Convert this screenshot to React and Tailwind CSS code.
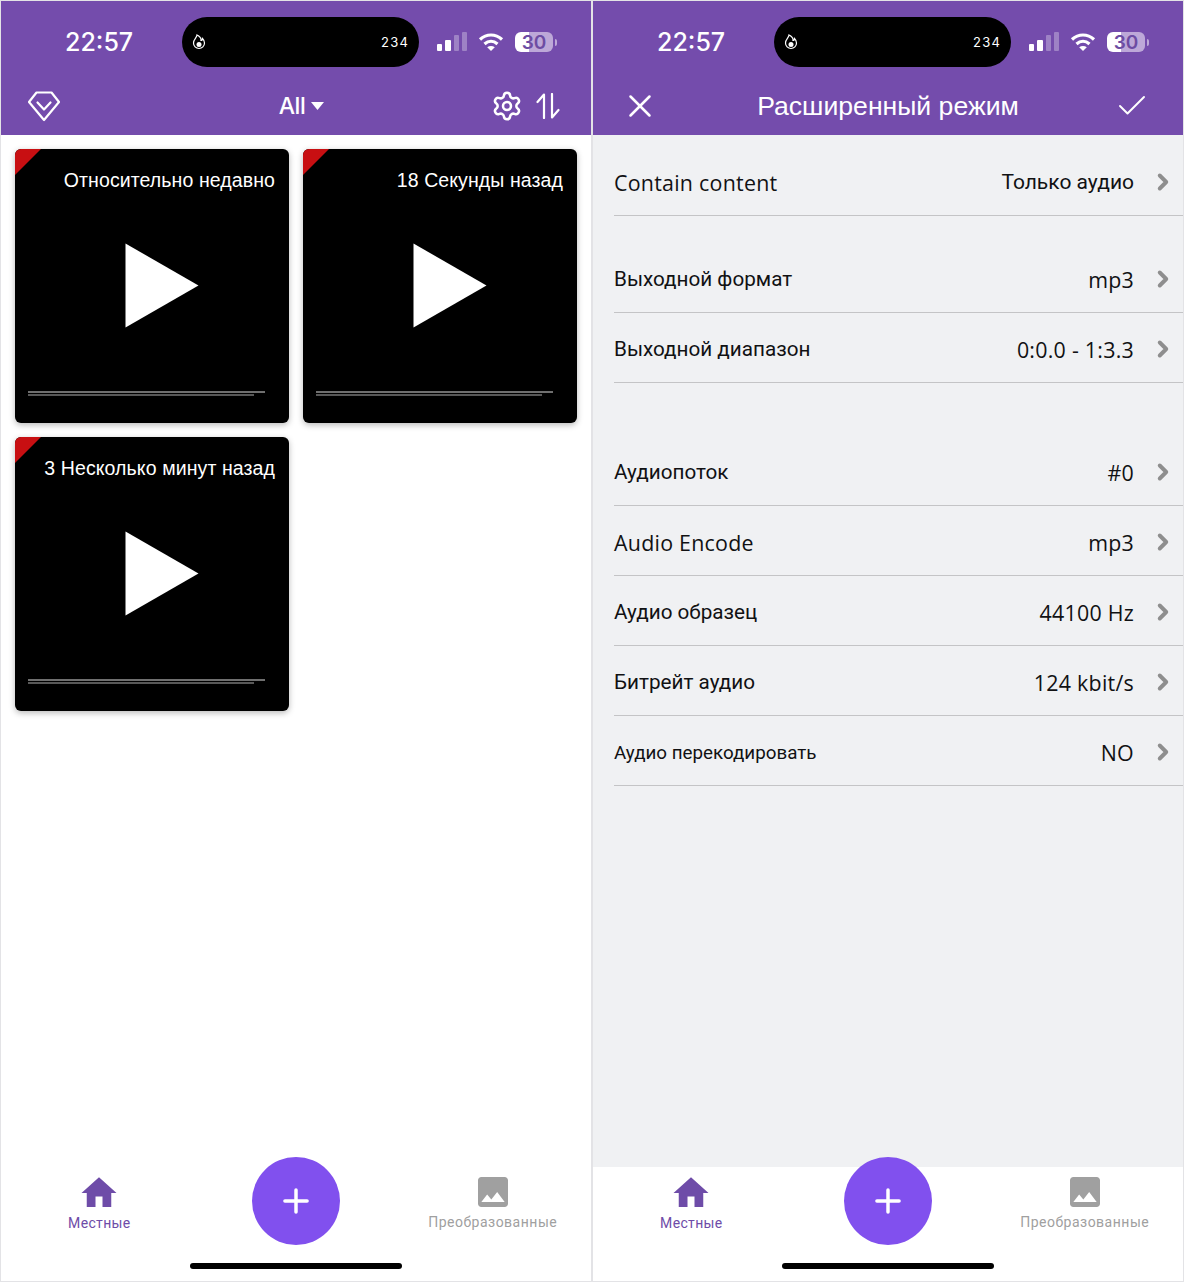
import React from 'react';
import { Settings, X, Check, Plus, ChevronRight } from 'lucide-react';
import { MdHome, MdImage } from 'react-icons/md';

const videos = [
  { label: 'Относительно недавно' },
  { label: '18 Секунды назад' },
  { label: '3 Несколько минут назад' },
];

const wide = "font-['Open_Sans'] text-[21.4px] tracking-[0.25px]";
const plain = "font-['Roboto'] text-[20.7px]";
const plainValue = "font-['Roboto'] text-[21px]";

const groups = [
  { gap: 'mt-[10px]', rows: [{ label: 'Contain content', value: 'Только аудио', labelFont: wide, valueFont: plainValue }] },
  {
    gap: 'mt-[27px]',
    rows: [
      { label: 'Выходной формат', value: 'mp3', labelFont: plain, valueFont: wide },
      { label: 'Выходной диапазон', value: '0:0.0 - 1:3.3', labelFont: plain, valueFont: wide },
    ],
  },
  {
    gap: 'mt-[53px]',
    rows: [
      { label: 'Аудиопоток', value: '#0', labelFont: plain, valueFont: wide },
      { label: 'Audio Encode', value: 'mp3', labelFont: wide, valueFont: wide },
      { label: 'Аудио образец', value: '44100 Hz', labelFont: plain, valueFont: wide },
      { label: 'Битрейт аудио', value: '124 kbit/s', labelFont: plain, valueFont: wide },
      { label: 'Аудио перекодировать', value: 'NO', labelFont: "font-['Roboto'] text-[18.8px]", valueFont: wide },
    ],
  },
];

const StatusBar = () => (
  <div className="flex items-center h-[50px] mt-[16px] pl-[64px] text-white">
    <span className="w-[117px] font-['Inter'] text-[25px] font-medium leading-none">22:57</span>
    <div className="w-[237px] h-[50px] rounded-full bg-black flex items-center justify-between pl-[10px] pr-[10px]">
      <svg width="14" height="16" viewBox="0 0 14 16" fill="none" stroke="#fff" strokeWidth="1.2">
        <path d="M5 1c0 2.500-3.500 4-3.500 8a5.500 5.500 0 0 0 11 0c0-2-1-3.500-2-4.500 0 1.500-.7 2-1.500 2C9.500 4.500 7.500 2 5 1z" />
        <circle cx="7" cy="10.500" r="2.500" fill="#fff" stroke="none" />
      </svg>
      <span className="font-['Inter'] text-[13px] tracking-[1.2px] leading-none">234</span>
    </div>
    <svg className="ml-[18px]" width="31" height="20" viewBox="0 0 31 20" fill="#fff">
      <rect x="0" y="12" width="5" height="7" rx="1" />
      <rect x="8" y="8" width="6" height="11" rx="1" />
      <rect x="17" y="3" width="5" height="16" rx="1" fillOpacity="0.3" />
      <rect x="25" y="0" width="5" height="19" rx="1" fillOpacity="0.3" />
    </svg>
    <svg className="ml-[10px]" width="26" height="20" viewBox="0 0 26 20" fill="none" stroke="#fff" strokeWidth="3.2">
      <path d="M2 7.500c6.500-6 15.500-6 22 0" />
      <path d="M6.500 12c4-3.500 9-3.500 13 0" />
      <path d="M13 19l-3.800-3.700c2.200-1.700 5.400-1.700 7.600 0z" fill="#fff" stroke="none" />
    </svg>
    <div className="ml-[11px] w-[38px] h-[20px] rounded-[6px] bg-[linear-gradient(90deg,#fff_37%,#bda8d8_37%)] flex items-center justify-center">
      <span className="font-['Inter'] text-[19px] font-semibold leading-none text-[#6d4ca3]">30</span>
    </div>
    <div className="ml-[2px] w-[2px] h-[7px] rounded-r-full bg-[#bda8d8]" />
  </div>
);

const LocalNav = () => (
  <div className="flex items-center justify-between h-[69px] pt-[9px] pl-[26px] pr-[31px] text-white">
    <svg width="34" height="32" viewBox="0 0 34 32" fill="none" stroke="#fff" strokeWidth="2.200" strokeLinejoin="round" strokeLinecap="round">
      <path d="M9.500 2.500h15L32 12 17 30 2 12z" />
      <path d="M10.500 12.500 17 19.500l6.500-7" />
    </svg>
    <div className="flex items-center ml-[50px]">
      <span className="font-['Inter'] text-[23px] font-medium leading-none tracking-[-0.5px]">All</span>
      <svg className="ml-[6px]" width="13" height="8" viewBox="0 0 13 8" fill="#fff">
        <path d="M0 0h13L6.500 8z" />
      </svg>
    </div>
    <div className="flex items-center gap-[13px]">
      <Settings size={32} strokeWidth={1.9} className="-ml-[1px]" />
      <svg width="24" height="26" viewBox="0 0 24 26" fill="none" stroke="#fff" strokeWidth="2.200" strokeLinecap="round" strokeLinejoin="round">
        <path d="M8 25V1.500L1.500 9" />
        <path d="M16 1v23.500L22.500 17" />
      </svg>
    </div>
  </div>
);

const AdvancedNav = () => (
  <div className="grid grid-cols-[1fr_auto_1fr] items-center h-[69px] pt-[9px] px-[32px] text-white">
    <X size={38} strokeWidth={1.6} className="ml-[-4px]" />
    <span className="font-['Liberation_Sans'] text-[26.6px] leading-none">Расширенный режим</span>
    <Check size={36} strokeWidth={1.3} className="justify-self-end mr-[1px]" />
  </div>
);

const VideoCard = ({ label }) => (
  <div className="relative h-[274px] rounded-[6px] overflow-hidden bg-black shadow-[0_2px_6px_rgba(0,0,0,0.28)] flex flex-col">
    <div className="absolute top-0 left-0 w-[26px] h-[26px] bg-[#c80f12] [clip-path:polygon(0_0,100%_0,0_100%)]" />
    <p className="mt-[19px] pr-[14px] text-right text-white font-['Liberation_Sans'] text-[19.5px] tracking-[0.1px] leading-[24px]">{label}</p>
    <svg className="ml-[110px] mt-[51px]" width="74" height="85" viewBox="0 0 74 85" fill="#fff">
      <path d="M0.500 0.500 73.500 42.500 0.500 84.500z" />
    </svg>
    <div className="mt-[63px] ml-[13px] flex flex-col gap-[1px]">
      <div className="w-[237px] h-[2px] bg-[#6f6f6f]" />
      <div className="w-[226px] h-[2px] bg-[#585858]" />
    </div>
  </div>
);

const BottomNav = () => (
  <div className="relative grid grid-cols-3 h-[114px] bg-white">
    <div className="flex flex-col items-center pt-[5px] text-[#6e4ca8]">
      <MdHome size={42} />
      <span className="mt-[1px] font-['Roboto'] text-[14px] tracking-[0.35px] leading-[16px]">Местные</span>
    </div>
    <div className="flex justify-center">
      <div className="w-[88px] h-[88px] -mt-[10px] rounded-full bg-[#8150ee] flex items-center justify-center text-white">
        <Plus size={38} strokeWidth={2.2} />
      </div>
    </div>
    <div className="flex flex-col items-center pt-[5px] text-[#a0a0a0]">
      <MdImage size={40} className="-mb-[1px]" />
      <span className="mt-[3px] font-['Roboto'] text-[14px] tracking-[0.5px] leading-[16px] whitespace-nowrap">Преобразованные</span>
    </div>
    <div className="absolute left-1/2 -translate-x-1/2 bottom-[12px] w-[212px] h-[6px] rounded-full bg-black" />
  </div>
);

const Phone = ({ nav, children, bg }) => (
  <div className={`w-[592px] h-[1282px] flex flex-col border border-[#e3e3e6] ${bg}`}>
    <div className="h-[134px] bg-[#744cac]">
      <StatusBar />
      {nav}
    </div>
    <div className="flex-1">{children}</div>
    <BottomNav />
  </div>
);

const App = () => {
  return (
    <div className="w-[1184px] h-[1282px] flex bg-white overflow-hidden">
      {/* Video list */}
      <Phone nav={<LocalNav />} bg="bg-white">
        <div className="grid grid-cols-[274px_274px] gap-[14px] px-[14px] pt-[14px]">
          {videos.map((v) => (
            <VideoCard key={v.label} label={v.label} />
          ))}
        </div>
      </Phone>

      {/* Advanced settings */}
      <Phone nav={<AdvancedNav />} bg="bg-[#f0f1f3]">
        <div className="pt-[1px]">
          {groups.map((group) => (
            <div key={group.gap} className={`${group.gap} pl-[21px]`}>
              {group.rows.map((row) => (
                <div key={row.label} className="h-[70px] pt-[3px] flex items-center border-b border-[#c4c4c6] text-[#111113]">
                  <span className={`flex-1 mt-[2px] ${row.labelFont}`}>{row.label}</span>
                  <span className={`mt-[2px] ${row.valueFont}`}>{row.value}</span>
                  <ChevronRight size={26} strokeWidth={3.6} className="ml-[16px] mr-[7px] text-[#8e8e8e]" />
                </div>
              ))}
            </div>
          ))}
        </div>
      </Phone>
    </div>
  );
};

export default App;
